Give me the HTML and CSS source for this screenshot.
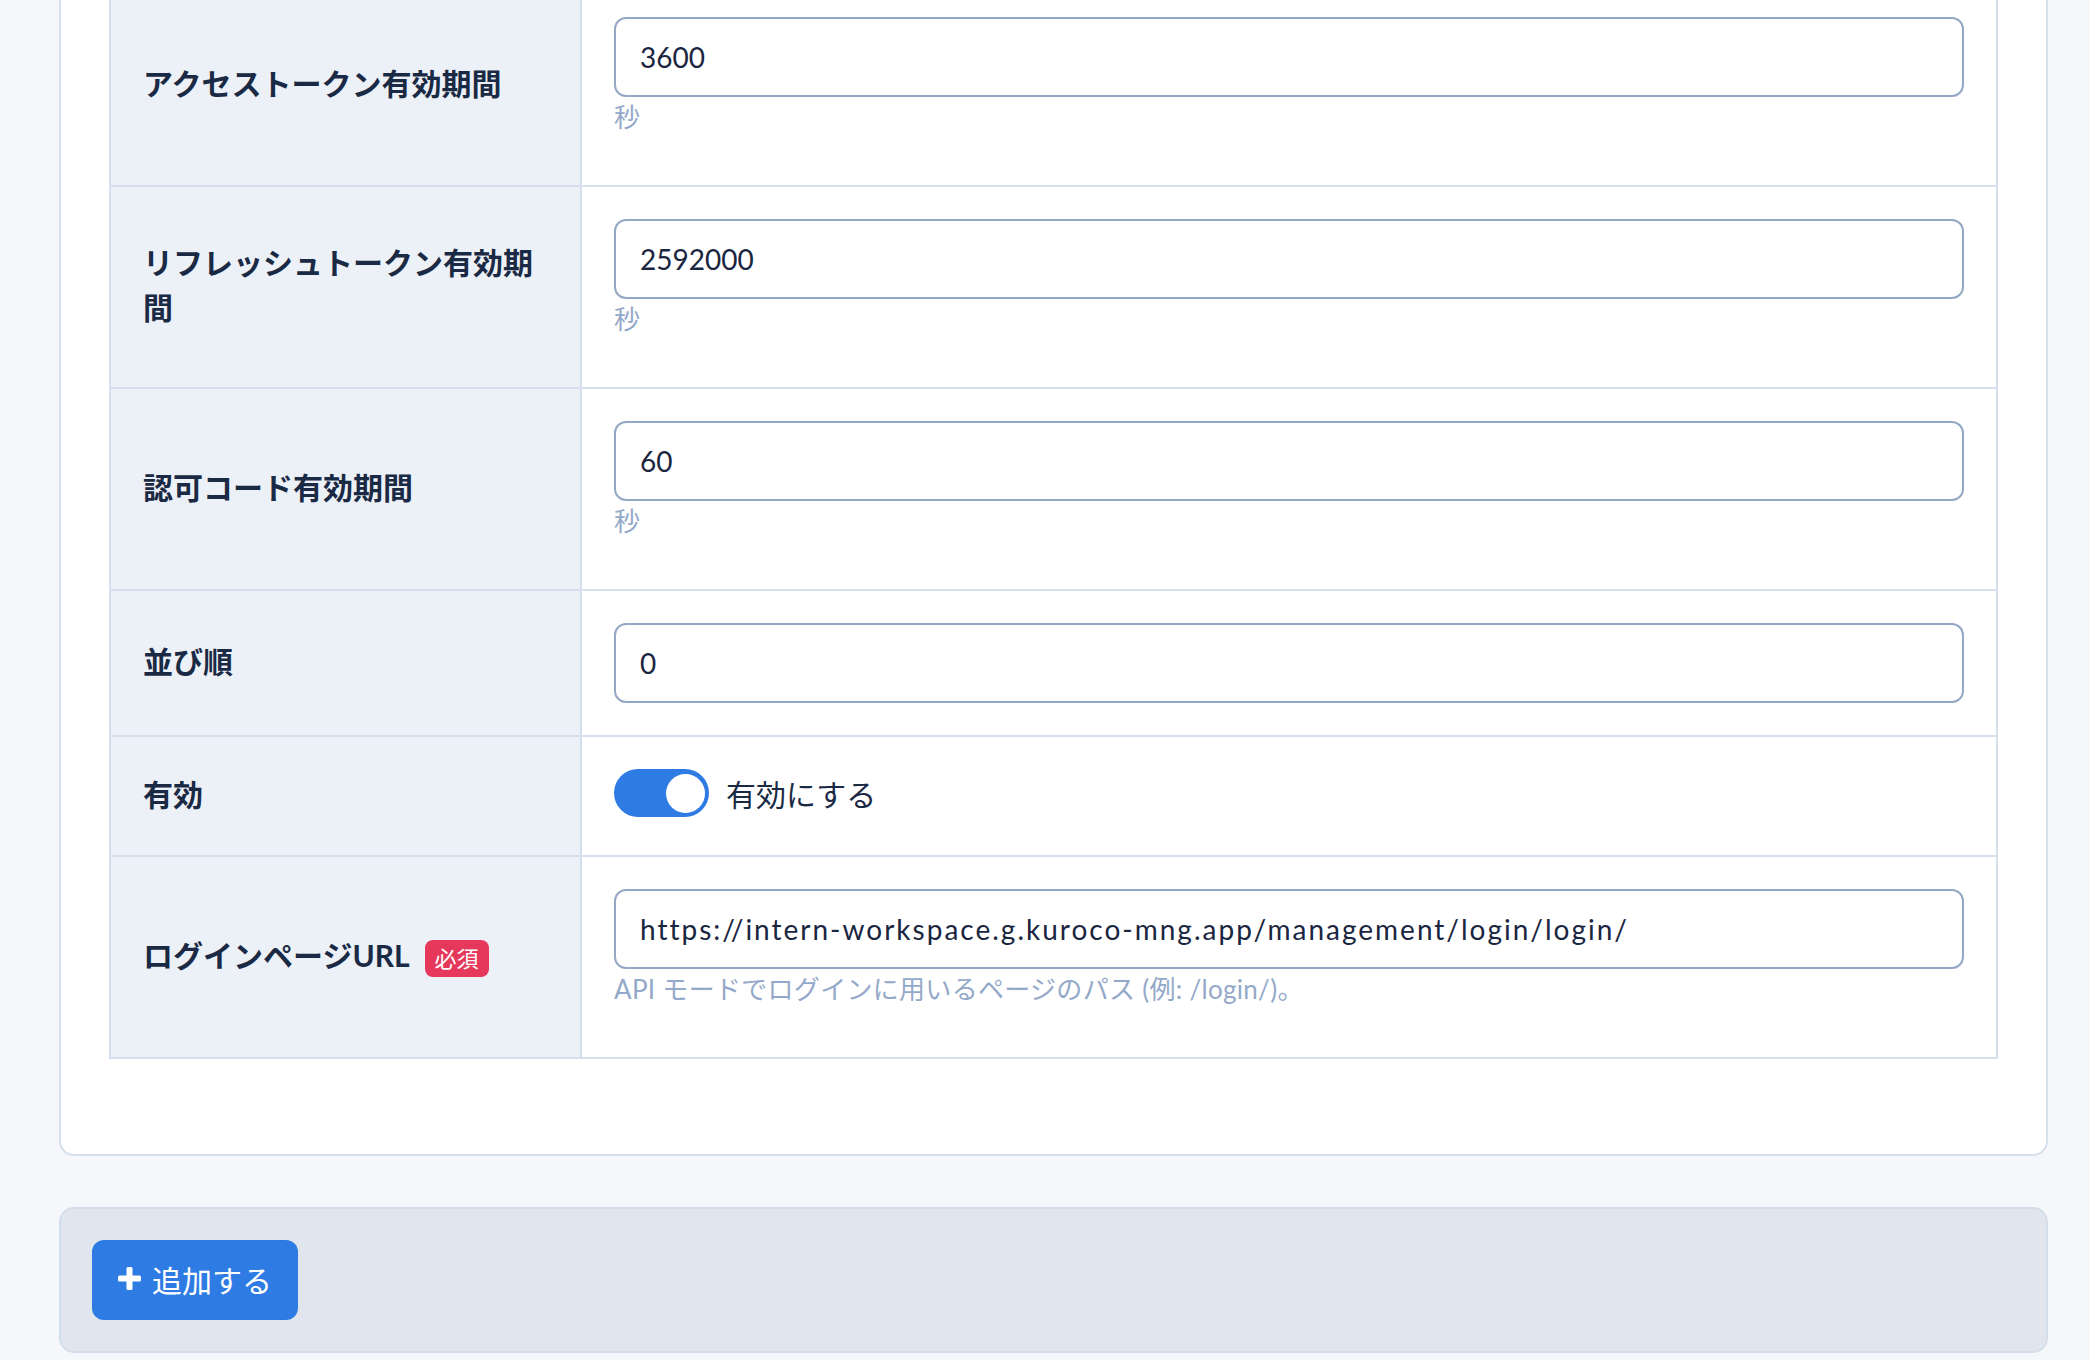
FILE: index.html
```html
<!DOCTYPE html>
<html lang="ja">
<head>
  <meta charset="UTF-8">
  <meta name="viewport" content="width=device-width, initial-scale=1.0">
  <title>OAuth 設定</title>
  <link rel="stylesheet" href="styles.css">
</head>
<body>
  <div class="page">
    <div class="card">
      <table class="form-table">
        <tr>
          <th>アクセストークン有効期間</th>
          <td>
            <input class="text-input" type="text" value="3600">
            <p class="hint">秒</p>
          </td>
        </tr>
        <tr>
          <th>リフレッシュトークン有効期間</th>
          <td>
            <input class="text-input" type="text" value="2592000">
            <p class="hint">秒</p>
          </td>
        </tr>
        <tr>
          <th>認可コード有効期間</th>
          <td>
            <input class="text-input" type="text" value="60">
            <p class="hint">秒</p>
          </td>
        </tr>
        <tr>
          <th>並び順</th>
          <td>
            <input class="text-input" type="text" value="0">
          </td>
        </tr>
        <tr>
          <th>有効</th>
          <td>
            <!-- トグル -->
            <label class="switch">
              <span class="switch-track"><span class="switch-knob"></span></span>
              <span class="switch-label">有効にする</span>
            </label>
          </td>
        </tr>
        <tr>
          <th>ログインページURL<span class="badge">必須</span></th>
          <td>
            <input class="text-input text-input--url" type="text" value="https://intern-workspace.g.kuroco-mng.app/management/login/login/">
            <p class="hint">API モードでログインに用いるページのパス (例: /login/)。</p>
          </td>
        </tr>
      </table>
    </div>

    <div class="actions">
      <button class="add-btn" type="button">
        <svg class="plus" width="25" height="25" viewBox="0 0 25 25">
          <rect x="9.5" y="1" width="6" height="23" rx="1.5" fill="#fff"/>
          <rect x="1" y="9.5" width="23" height="6" rx="1.5" fill="#fff"/>
        </svg>
        追加する
      </button>
    </div>
  </div>
</body>
</html>
```

FILE: styles.css
```css
body {
  margin: 0;
  background-color: #f5f7fa;
  font-family: "Lato", "Noto Sans CJK JP", sans-serif;
  color: #1b2a44;
}

.page {
  padding: 0 42px 7px 59px;
}

/* 設定カード（上部はスクロールで隠れている） */
.card {
  margin-top: -67px;
  background-color: #fff;
  border: 2px solid #d5e0ec;
  border-radius: 15px;
  padding: 48px 48px 95px;
}

.form-table {
  width: 100%;
  border-collapse: collapse;
}

.form-table th {
  width: 403px;
  padding: 0 34px 4px 32px;
  background-color: #ecf1f8;
  border: 2px solid #d5e0ec;
  text-align: left;
  vertical-align: middle;
  font-size: 30px;
  font-weight: 700;
  line-height: 45px;
  color: #1b2a44;
}

.form-table td {
  padding: 32px;
  border: 2px solid #d5e0ec;
  vertical-align: top;
}

.text-input {
  display: block;
  box-sizing: border-box;
  width: 100%;
  height: 80px;
  padding: 0 24px;
  border: 2px solid #94a8c5;
  border-radius: 12px;
  font-family: inherit;
  font-size: 28px;
  color: #1a2640;
  background-color: #fff;
  outline: none;
}

.text-input--url {
  letter-spacing: 2px;
}

.hint {
  margin: 2px 0 18px;
  font-size: 26px;
  line-height: 36px;
  letter-spacing: 0.3px;
  color: #94a9c9;
}

.switch {
  display: flex;
  align-items: center;
  gap: 17px;
  height: 48px;
  margin-bottom: 6px;
}

.switch-track {
  display: flex;
  justify-content: flex-end;
  align-items: center;
  box-sizing: border-box;
  width: 95px;
  height: 48px;
  padding: 0 4px;
  border-radius: 24px;
  background-color: #2e7be4;
}

.switch-knob {
  width: 39px;
  height: 39px;
  border-radius: 50%;
  background-color: #fff;
}

.switch-label {
  font-size: 30px;
  color: #1b2a44;
}

.badge {
  display: inline-block;
  margin-left: 15px;
  padding: 0 10px;
  height: 37px;
  line-height: 37px;
  border-radius: 8px;
  background-color: #e5385a;
  color: #fff;
  font-size: 22px;
  font-weight: 400;
  vertical-align: middle;
}

/* 下部の追加ボタン */
.actions {
  margin-top: 51px;
  background-color: #e1e6ee;
  border: 2px solid #d3deea;
  border-radius: 15px;
  padding: 31px;
}

.add-btn {
  display: inline-flex;
  align-items: center;
  gap: 10px;
  height: 80px;
  padding: 0 26px 3px 25px;
  border: none;
  border-radius: 12px;
  background-color: #2e7be4;
  color: #fff;
  font-family: inherit;
  font-size: 30px;
  cursor: pointer;
}
```
